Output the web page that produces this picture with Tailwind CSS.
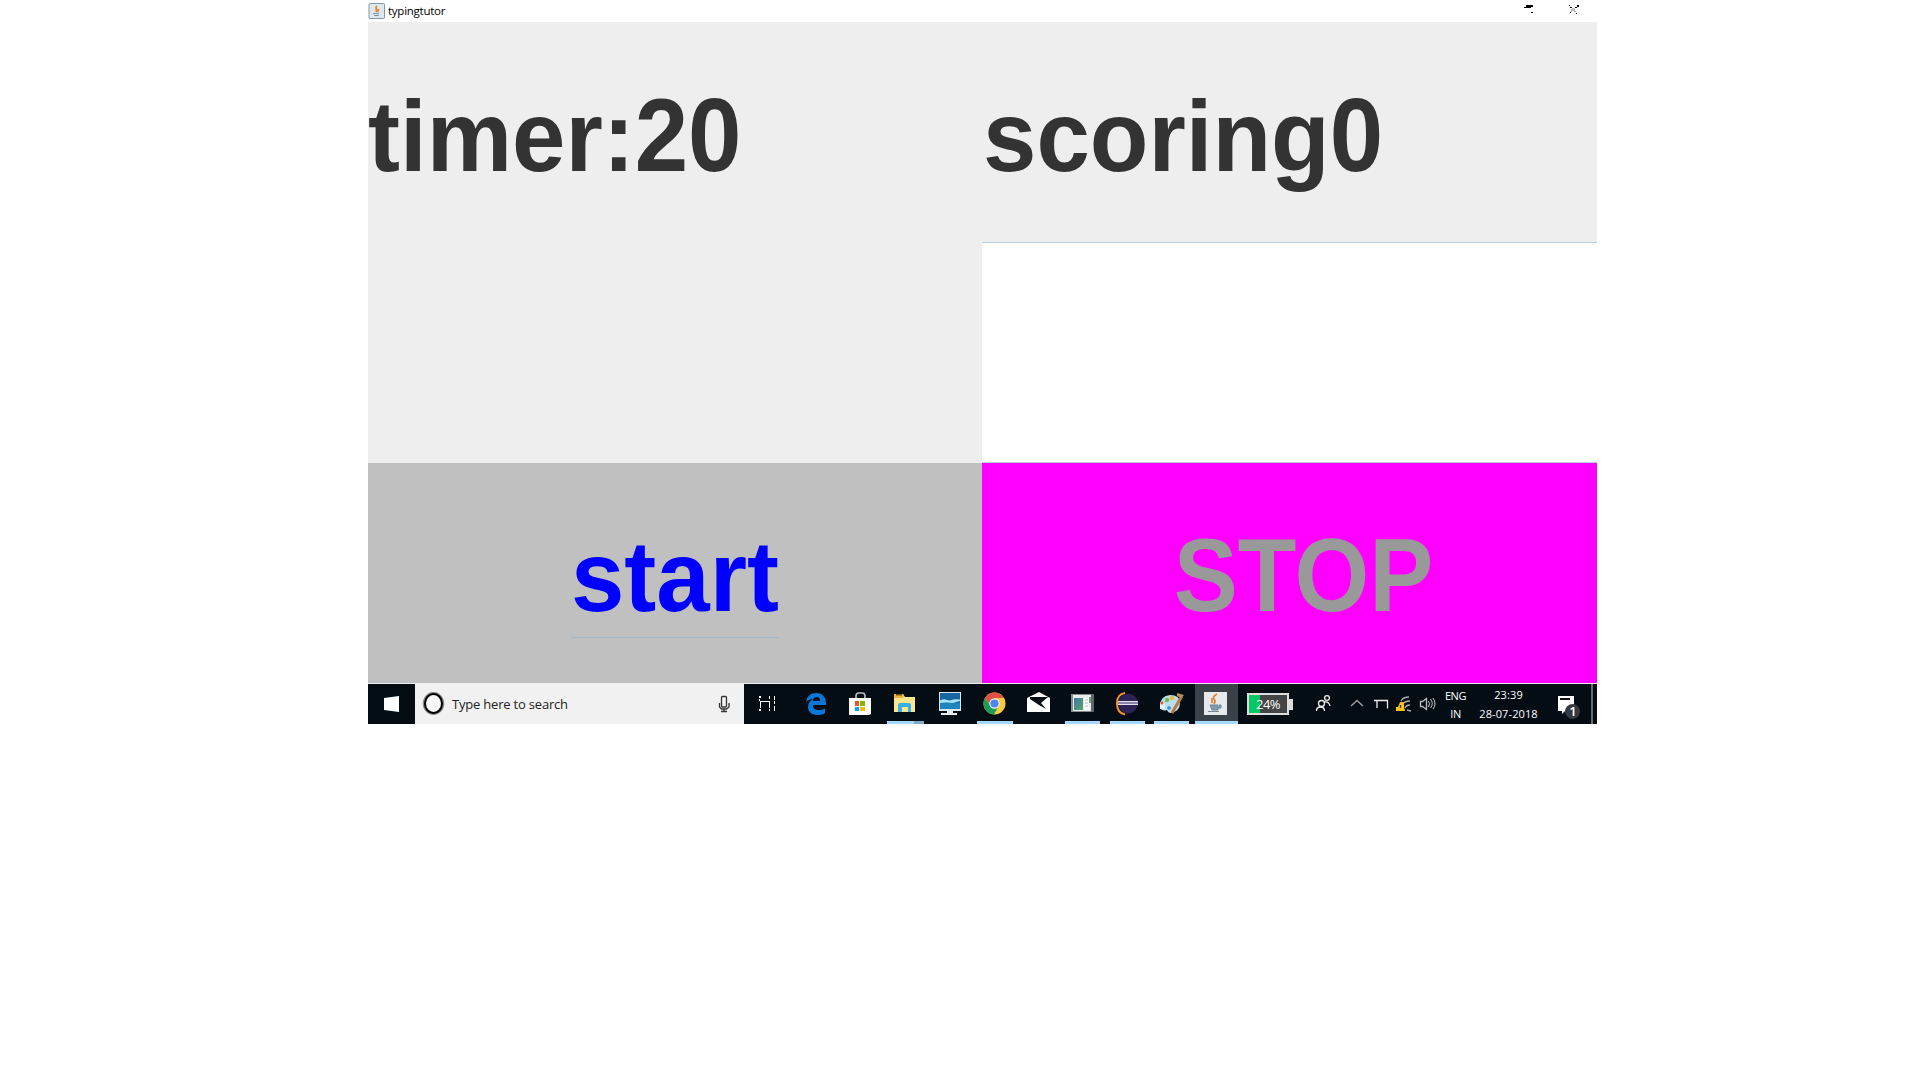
<!DOCTYPE html>
<html lang="en">
<head>
<meta charset="utf-8">
<title>typingtutor</title>
<script src="https://cdn.jsdelivr.net/npm/@tailwindcss/browser@4"></script>
</head>
<body class="bg-white overflow-hidden font-['Liberation_Sans',sans-serif]">
<main class="ml-[368px] w-[1229px] h-[724px] flex flex-col">
  <header class="h-[22px] flex items-start justify-between bg-white">
    <div class="flex items-start gap-[3px] pt-0.5">
      <svg class="w-[17px] h-4 mt-px" viewBox="0 0 17 16"><rect x="1" y=".5" width="15.500" height="15" rx="1" fill="#dfe7ee" stroke="#8198ab"/><path d="M9 3c-3 2 1 3-1 6M10.500 6l-1 3" stroke="#e8852b" stroke-width="1.800" fill="none"/><path d="M5 10.500h6M6 12.500h5" stroke="#7c93ab"/></svg>
      <span class="text-[11.500px] leading-[17px] text-black font-['Open_Sans',sans-serif] tracking-[-0.25px]">typingtutor</span>
    </div>
    <svg class="w-[97px] h-[22px]" viewBox="1500 0 97 22" shape-rendering="crispEdges"><path d="M1526 5h7v2h-2v1h-7V7h2zM1531 12h2v1h-2zM1577 5h2v2h-2zM1569 5h1v1h-1zM1570 7h2v1h-2zM1575 7h2v1h-2zM1570 12h1v1h-1zM1576 13h1v1h-1z" fill="#000"/><path d="M1572 8h3v1h-3zM1571 9h4v2h-4zM1570 11h2v1h-2zM1574 11h2v1h-2zM1569 13h1v1h-1z" fill="#bbb"/></svg>
  </header>

  <section class="grid grid-cols-[614px_615px] grid-rows-[220px_221px_220px] text-[96px] leading-none font-bold">
    <div class="bg-[#eee] text-[#333] pt-[68px] whitespace-nowrap"><div class="origin-[0_87px] scale-y-[1.045]">timer:<span class="inline-block origin-[0_83px] scale-y-[1.03]">20</span></div></div>
    <div class="bg-[#eee] text-[#333] pt-[68px] pl-px whitespace-nowrap"><div class="origin-[0_87px] scale-y-[1.045]">scoring<span class="inline-block origin-[0_83px] scale-y-[1.03]">0</span></div></div>
    <div class="bg-[#eee]"></div>
    <div class="bg-white border-y border-[#b8cfe5]"></div>
    <div class="bg-[#c0c0c0] text-[#00f] flex justify-center pt-[61px]"><div class="h-[114px] pt-[6px] border-b border-[#a3b8cc]"><div class="origin-[0_87px] scale-y-[1.045]">start</div></div></div>
    <div class="bg-[#f0f] text-[#999] flex justify-center pt-[68px] pl-[28px]"><div class="h-24 origin-[0_87px] scale-y-[1.086]">STOP</div></div>
  </section>

  <footer class="h-[41px] border-t border-[#eee] bg-[#040c14] flex text-white font-['Open_Sans',sans-serif]">
    <svg class="w-[47px] h-10" viewBox="368 684 47 40"><path d="M384 698l15-2v16l-15-2z" fill="#fff"/></svg>
    <div class="w-[329px] h-10 bg-[#f1f1f1] flex text-[#222]">
      <svg class="w-[37px] h-10" viewBox="415 684 37 40"><ellipse cx="433.500" cy="703.500" rx="9" ry="9.700" fill="none" stroke="#888" stroke-width="3.500"/><ellipse cx="433.500" cy="703.500" rx="8.500" ry="9.500" fill="#f8f8f8" stroke="#000" stroke-width="2"/></svg>
      <span class="w-[258px] text-[13px] leading-[41px] tracking-[-0.2px] whitespace-nowrap">Type here to search</span>
      <svg class="w-[34px] h-10" viewBox="710 684 34 40" fill="none" stroke="#333" stroke-width="1.300"><rect x="721.500" y="696.500" width="5" height="10.500" rx="1"/><path d="M719.500 703v4l2 2h5l2.500-2v-4M724 709v2M721 711.500h6"/></svg>
    </div>
    <svg class="w-[46px] h-10" viewBox="744 684 46 40" fill="#fff" shape-rendering="crispEdges"><path d="M759 696h2v2h-2zM769 696h1v3h-1zM759 699h1v2h10v7h-1v-6h-8v6h-1v-7h-1zM759 709h2v2h-2zM769 709h1v2h-1zM774 696h1v4h-1zM774 701h1v3h-1zM774 706h1v5h-1z"/></svg>
    <svg class="w-12 h-10" viewBox="790 684 48 40"><path d="M806 702c1-6 5-9 10-9 7 0 10 5 10 10v2h-13c0 4 3 5 6 5 2 0 4-.5 6-1.500v4.500c-2 1.500-5 2-8 2-6 0-9-4-9-8 0-4 2-6 5-8-4 0-6 2-7 3zm7-1h7c0-3-1-4-3-4s-4 1-4 4z" fill="#0878d7"/></svg>
    <svg class="w-11 h-10" viewBox="838 684 44 40"><path d="M856 698v-2q0-3 3-3h3q3 0 3 3v2" fill="none" stroke="#bbb" stroke-width="1.700"/><path d="M849 698h22v16l-2 1h-20z" fill="#fff"/><path d="M855 701h4v5h-4z" fill="#f25022"/><path d="M860 701h5v5h-5z" fill="#7fba00"/><path d="M855 707h4v4h-4z" fill="#00a4ef"/><path d="M860 707h5v4h-5z" fill="#ffb900"/></svg>
    <svg class="w-[47px] h-10" viewBox="882 684 47 40"><path d="M894 694h9l2 3h10v15h-21z" fill="#ffe691"/><path d="M894 694h9l1 2-1 2h-9z" fill="#e8b63c"/><path d="M896 694h6v1.500h-6z" fill="#6d5518"/><path d="M898 705q0-2 2-2h9q2 0 2 2v7h-3v-5h-6v5h-4z" fill="#38b1e8"/><path d="M887 721h27v3h-27z" fill="#a6d8ff"/><path d="M914 721h10v3h-10z" fill="#82a9c9"/></svg>
    <svg class="w-[43px] h-10" viewBox="929 684 43 40"><path d="M939 692h22v19h-22z" fill="#dce8ef"/><path d="M940 693h20v16h-20z" fill="#16669f"/><path d="M940 703h20v6h-20z" fill="#1c84bf"/><path d="M940 700.500q4-2 7-.5l3 .5q5-2 10-1v1.500l-7 2q-6-1-13 0z" fill="#a5e4f5"/><path d="M947 711h6v2h4v2h-16v-2h6z" fill="#e8eef2"/></svg>
    <svg class="w-[47px] h-10" viewBox="972 684 47 40"><circle cx="994.500" cy="703.500" r="11" fill="#fbca3e"/><path d="M985 698a11 11 0 0 1 19 0h-9.500l-5 5.500z" fill="#de5145"/><path d="M985 698a11 11 0 0 0 9 16.500l4.500-8-4 1.500q-4 0-5-4z" fill="#1b9d58"/><circle cx="994.500" cy="703.500" r="5.200" fill="#f2f2f2"/><circle cx="994.500" cy="703.500" r="4.100" fill="#4b87ee"/><path d="M977 721h36v3h-36z" fill="#a6d8ff"/></svg>
    <svg class="w-[41px] h-10" viewBox="1019 684 41 40"><path d="M1027 698l12-6 11 6v14h-23z" fill="#fff"/><path d="M1030 697h18l-7 6 5 6-7-4-9-6z" fill="#040c14"/></svg>
    <svg class="w-[45px] h-10" viewBox="1060 684 45 40"><path d="M1071 694h23v18h-23z" fill="#858b8e"/><path d="M1073 695h19v16h-19z" fill="#e8ecec"/><linearGradient id="pane" x2="1" y2="1"><stop stop-color="#3a78a8"/><stop offset="1" stop-color="#5ba469"/></linearGradient><path d="M1074 698h9v12h-9z" fill="url(#pane)"/><path d="M1084 698h5v12h-5z" fill="#fff"/><path d="M1085 700h3M1085 703h3M1085 706h3" stroke="#b5bdc0"/><path d="M1089 697h2v6h-2z" fill="#66a875"/><path d="M1091 694h3v18h-3z" fill="#606568"/><path d="M1065 721h35v3h-35z" fill="#a6d8ff"/></svg>
    <svg class="w-11 h-10" viewBox="1105 684 44 40"><path d="M1125 693q-8 1-8 10.500t8 11" fill="none" stroke="#f7941e" stroke-width="2"/><circle cx="1128" cy="703.500" r="10" fill="#2c2255"/><path d="M1118 701h20v1.500h-20zM1118 703.500h20v1.500h-20z" fill="#e4e0ee"/><path d="M1118 702.500h20v1h-20z" fill="#8f85b5"/><path d="M1110 721h35v3h-35z" fill="#a6d8ff"/></svg>
    <svg class="w-[46px] h-10" viewBox="1149 684 46 40"><path d="M1160 706q0-10 10-11 10 0 10 8 0 8-9 10-3 0-4-3-6 2-7-4z" fill="#b9dcef"/><path d="M1160 703h5v6h-5z" fill="#e2f1f6"/><circle cx="1167" cy="700" r="2.200" fill="#75b843"/><circle cx="1172" cy="698" r="2.200" fill="#efb83e"/><circle cx="1162" cy="703" r="1.500" fill="#dd5849"/><circle cx="1169" cy="708" r="1.800" fill="#398fc7"/><path d="M1182 696l-10 17" stroke="#b7793d" stroke-width="3"/><path d="M1177 693l7 2-3 3-4-2z" fill="#b98e63"/><path d="M1154 721h35v3h-35z" fill="#a6d8ff"/></svg>
    <svg class="w-[43px] h-10 bg-[#3a4149]" viewBox="1195 684 43 40"><path d="M1204 692h23v23h-23z" fill="#e7e9ea"/><path d="M1217 694q-5 3-3 5t0 5M1212 698v5" fill="none" stroke="#e47b2b" stroke-width="1.600"/><path d="M1210 705h8v5h-6zM1219 705h2v3h-3M1208 711.500h11" fill="#7d9aaf" stroke="#6d879d"/><path d="M1195 721h43v3h-43z" fill="#a6d8ff"/></svg>
    <div class="w-[66px] flex items-center pl-[9px]">
      <div class="w-[42px] h-[22px] border-2 border-[#ddd] bg-linear-to-r from-[#08c765] from-30% to-[#444] to-30% text-[13px] leading-[19px] text-center tracking-[-0.6px]">24%</div>
      <div class="w-1 h-[11px] bg-[#ddd]"></div>
    </div>
    <svg class="w-9 h-10" viewBox="1304 684 36 40" fill="none" stroke="#eee" stroke-width="1.300"><circle cx="1327" cy="698" r="2.400"/><circle cx="1321.500" cy="703.500" r="3"/><path d="M1316.500 711q0-4 4-4t4 4M1324 702q5-1 6 4"/></svg>
    <svg class="w-[101px] h-10" viewBox="1340 684 101 40" fill="none" stroke="#eee" stroke-width="1.300"><path d="M1351 706l6-5.500 6 5.500" stroke="#999" stroke-width="1.600"/><path d="M1374 700.500h13.500v8M1377 700v8"/><path d="M1401 701q2-4 8-4M1402 705q2-4 8-4M1405 708q1-3 5-3M1407 710l4 1" stroke="#aaa"/><path d="M1400 702h4v5l1 4h-9v-4h2z" fill="#ffc20e" stroke="none"/><path d="M1400.500 705v3" stroke="#333"/><path d="M1420.500 701.500h2l4-3v11l-4-3h-2z" stroke="#bbb"/><path d="M1428.500 701q2 2.500 0 6M1430.500 699q3.500 4.500 0 9M1433 698q4 6 0 11" stroke="#ccc" stroke-width="1"/></svg>
    <div class="w-[29px] flex flex-col items-center text-[11px] leading-[18px] pt-[3px] tracking-[-0.4px]"><span>ENG</span><span>IN</span></div>
    <div class="w-[75px] pl-0.5 flex flex-col items-center text-[11px] leading-[18px] pt-[3px] whitespace-nowrap tracking-[0.1px]"><span class="h-[18px] -mt-px mb-px">23:39</span><span>28-07-2018</span></div>
    <div class="w-[52px] relative">
      <svg class="w-[52px] h-10" viewBox="1545 684 52 40"><path d="M1558 696h16v15h-9l-3 3v-3h-4z" fill="#fff"/><path d="M1560 699h10" stroke="#111" stroke-width="2"/><circle cx="1572.500" cy="711.500" r="7.500" fill="#343a40"/><path d="M1592 684v40" stroke="#666c72" stroke-width="2"/></svg>
      <span class="absolute left-5 top-[19px] w-4 text-center text-[13px] leading-4 font-semibold">1</span>
    </div>
  </footer>
</main>
</body>
</html>
